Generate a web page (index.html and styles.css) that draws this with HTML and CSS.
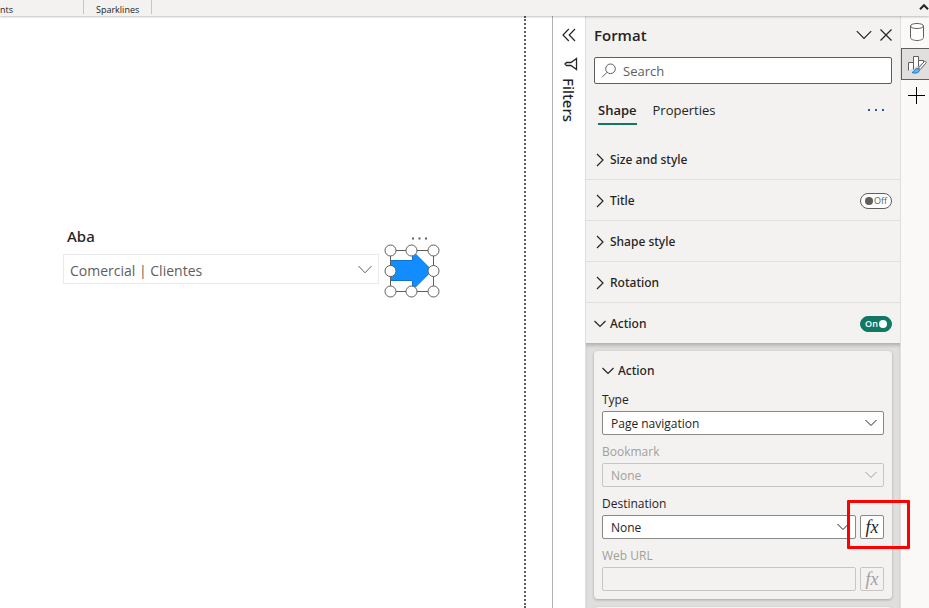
FILE: index.html
```html
<!DOCTYPE html>
<html lang="en">
<head>
    <meta charset="UTF-8">
    <meta name="viewport" content="width=device-width, initial-scale=1.0">
    <title>Report editor</title>
    <link rel="stylesheet" href="styles.css">
</head>
<body>
    <header class="ribbon">
        <div class="ribbon-group ribbon-first">nts</div>
        <div class="ribbon-group">Sparklines</div>
        <button class="icon-btn ribbon-collapse" aria-label="Collapse ribbon">
            <svg width="10" height="6" viewBox="0 0 10 6"><path d="M1 5.2 5 1.2 9 5.2" stroke-width="2"/></svg>
        </button>
    </header>

    <main class="workspace">
        <section class="canvas">
            <div class="report-page">
                <!-- Slicer -->
                <div class="slicer">
                    <label class="slicer-title" for="aba">Aba</label>
                    <div class="select-wrap">
                        <select id="aba">
                            <option>Comercial | Clientes</option>
                        </select>
                        <svg class="chevron" width="14" height="9" viewBox="0 0 14 9"><path d="M.5 1 7 7.8 13.5 1"/></svg>
                    </div>
                </div>

                <!-- Selected arrow shape -->
                <div class="shape">
                    <button class="icon-btn shape-more" aria-label="More options">
                        <svg width="16" height="3" viewBox="0 0 16 3"><path class="solid" d="M0 .5h2v2H0zM6.5 .5h2v2h-2zM13 .5h2v2h-2z"/></svg>
                    </button>
                    <svg width="56" height="54" viewBox="0 0 56 54">
                        <path d="M6.5 16.5H28.5V7L48 26.5 31 43.5 28.5 43V36.5H6.5z" fill="#118dff" stroke="#0f72cc"/>
                        <rect x="6.5" y="6.5" width="43" height="41" fill="none" stroke="#605e5c"/>
                        <g fill="#fff" stroke="#605e5c">
                            <circle cx="6.5" cy="6.5" r="5.5"/>
                            <circle cx="27.5" cy="6.5" r="5.5"/>
                            <circle cx="49.5" cy="6.5" r="5.5"/>
                            <circle cx="6.5" cy="27" r="5.5"/>
                            <circle cx="49.5" cy="27" r="5.5"/>
                            <circle cx="6.5" cy="47.5" r="5.5"/>
                            <circle cx="27.5" cy="47.5" r="5.5"/>
                            <circle cx="49.5" cy="47.5" r="5.5"/>
                        </g>
                    </svg>
                </div>
            </div>
        </section>

        <aside class="filters">
            <button class="icon-btn" aria-label="Expand filters">
                <svg width="14" height="14" viewBox="0 0 14 14"><path d="M6.8 1 1 7l5.8 6M13 1 7.2 7 13 13" stroke-width="1.2"/></svg>
            </button>
            <svg class="funnel" width="14" height="14" viewBox="0 0 14 14"><path d="M12.5 1.5v11L7 8.5H2.5L1 7 2.5 5.5H7z" stroke-width="1.3"/></svg>
            <span class="filters-label">Filters</span>
        </aside>

        <aside class="format">
            <div class="format-header">
                <h2>Format</h2>
                <button class="icon-btn" aria-label="Collapse">
                    <svg width="16" height="10" viewBox="0 0 16 10"><path d="M.8 1.2 8 8.5 15.2 1.2" stroke-width="1.2"/></svg>
                </button>
                <button class="icon-btn" aria-label="Close">
                    <svg width="12" height="12" viewBox="0 0 12 12"><path d="M.5 .5l11 11M11.5 .5l-11 11" stroke-width="1.2"/></svg>
                </button>
            </div>

            <div class="search">
                <svg width="16" height="16" viewBox="0 0 16 16"><circle cx="9.5" cy="5.8" r="4.8"/><path d="M6 9.3 1 14.3"/></svg>
                <input type="text" placeholder="Search" aria-label="Search">
            </div>

            <div class="tabs">
                <button class="tab active">Shape</button>
                <button class="tab">Properties</button>
                <button class="icon-btn tabs-more" aria-label="More options">
                    <svg width="16" height="2" viewBox="0 0 16 2"><path class="blue" d="M0 0h2v2H0zM7 0h2v2H7zM14 0h2v2h-2z"/></svg>
                </button>
            </div>

            <div class="group">
                <button class="group-btn"><svg width="12" height="14" viewBox="0 0 12 14"><path d="M3 1l6 6-6 6"/></svg>Size and style</button>
            </div>
            <div class="group">
                <button class="group-btn"><svg width="12" height="14" viewBox="0 0 12 14"><path d="M3 1l6 6-6 6"/></svg>Title</button>
                <label class="toggle"><input type="checkbox"><span>Off</span></label>
            </div>
            <div class="group">
                <button class="group-btn"><svg width="12" height="14" viewBox="0 0 12 14"><path d="M3 1l6 6-6 6"/></svg>Shape style</button>
            </div>
            <div class="group">
                <button class="group-btn"><svg width="12" height="14" viewBox="0 0 12 14"><path d="M3 1l6 6-6 6"/></svg>Rotation</button>
            </div>
            <div class="group group-open">
                <button class="group-btn"><svg width="12" height="14" viewBox="0 0 12 14"><path d="M.5 4 6 9.5 11.5 4"/></svg>Action</button>
                <label class="toggle toggle-on"><input type="checkbox" checked><span>On</span></label>
            </div>

            <div class="cards">
                <div class="card">
                    <button class="group-btn card-title"><svg width="12" height="14" viewBox="0 0 12 14"><path d="M.5 4 6 9.5 11.5 4"/></svg>Action</button>

                    <div class="field">
                        <label for="type">Type</label>
                        <div class="select-wrap">
                            <select id="type"><option>Page navigation</option></select>
                            <svg class="chevron" width="12" height="8" viewBox="0 0 12 8"><path d="M.5 1 6 6.5 11.5 1"/></svg>
                        </div>
                    </div>

                    <div class="field disabled">
                        <label for="bookmark">Bookmark</label>
                        <div class="select-wrap">
                            <select id="bookmark" disabled><option>None</option></select>
                            <svg class="chevron" width="12" height="8" viewBox="0 0 12 8"><path d="M.5 1 6 6.5 11.5 1"/></svg>
                        </div>
                    </div>

                    <div class="field">
                        <label for="destination">Destination</label>
                        <div class="field-row">
                            <div class="select-wrap">
                                <select id="destination"><option>None</option></select>
                                <svg class="chevron" width="12" height="8" viewBox="0 0 12 8"><path d="M.5 1 6 6.5 11.5 1"/></svg>
                            </div>
                            <div class="fx-wrap">
                                <button class="fx">fx</button>
                                <div class="highlight"></div>
                            </div>
                        </div>
                    </div>

                    <div class="field disabled">
                        <label for="url">Web URL</label>
                        <div class="field-row">
                            <input id="url" type="text" disabled>
                            <button class="fx" disabled>fx</button>
                        </div>
                    </div>
                </div>
                <div class="card"></div>
            </div>
        </aside>

        <nav class="rail">
            <button class="rail-btn" aria-label="Data">
                <svg width="16" height="20" viewBox="0 0 16 20"><g fill="#fff" stroke="#605e5c"><path d="M1.5 4v11.5C1.5 17.2 4.4 18.5 8 18.5s6.5-1.3 6.5-3V4"/><ellipse cx="8" cy="4" rx="6.5" ry="2.5"/></g></svg>
            </button>
            <button class="rail-btn selected" aria-label="Format">
                <svg width="20" height="20" viewBox="0 0 20 20">
                    <path d="M1.5 16.5v-8h5v-6h5v4h5v2" fill="#fff" stroke="#605e5c"/>
                    <path d="M6.5 8.5v7M11.5 6.5v6" stroke="#605e5c"/>
                    <path d="M18.8 7.5c.6.5.4 1.2 0 1.7l-5.5 6.3-1.8-1.5 5.6-6.2c.5-.5 1.1-.7 1.7-.3z" fill="#fff" stroke="#605e5c"/>
                    <path d="M5 18.5c2.2-.3 2.5-3.7 5-4 2-.1 3.2 1.6 2 3-1.7 1.9-4.8 2-7 1z" fill="#69afe5" stroke="#1f78c8"/>
                </svg>
            </button>
            <button class="rail-btn" aria-label="Add">
                <svg width="18" height="18" viewBox="0 0 18 18"><path d="M8.5 0v17M0 8.5h17" stroke="#000"/></svg>
            </button>
        </nav>
    </main>
</body>
</html>
```
FILE: styles.css
```css
/* General styling */
* {
    box-sizing: border-box;
}

body {
    font-family: "Open Sans", "Noto Sans", sans-serif;
    font-size: 12px;
    line-height: 16px;
    color: #252423;
    background-color: #fff;
    margin: 0;
    height: 100vh;
    display: flex;
    flex-direction: column;
    overflow: hidden;
}

button, input, select {
    font: inherit;
    color: inherit;
    margin: 0;
    padding: 0;
}

svg {
    display: block;
    flex: none;
    fill: none;
    stroke: #252423;
}

.solid {
    fill: #605e5c;
    stroke: none;
}

.blue {
    fill: #2b579a;
    stroke: none;
}

.icon-btn {
    border: none;
    background: none;
    cursor: pointer;
}

/* Ribbon */
.ribbon {
    display: flex;
    flex: none;
    height: 16px;
    background-color: #f3f2f1;
    box-shadow: 0 1px 2px rgba(0, 0, 0, 0.25);
    position: relative;
    z-index: 2;
    font-size: 9px;
    line-height: 20px;
}

.ribbon-group {
    height: 14px;
    padding: 0 12px;
    border-right: 1px solid #c8c6c4;
}

.ribbon-first {
    width: 84px;
    padding: 0;
}

.ribbon-collapse {
    margin: 4px 0 0 auto;
    align-self: flex-start;
}

.workspace {
    display: flex;
    flex: 1;
    min-height: 0;
}

/* Canvas */
.canvas {
    flex: 1;
    padding-right: 26px;
}

.report-page {
    position: relative;
    height: 100%;
    border-right: 2px dotted #605e5c;
}

.slicer {
    position: absolute;
    left: 63px;
    top: 212px;
    width: 316px;
}

.slicer-title {
    display: block;
    padding-left: 4px;
    font-family: "Noto Sans", sans-serif;
    font-size: 15px;
    font-weight: 500;
    line-height: 16px;
}

.shape {
    position: absolute;
    left: 384px;
    top: 221px;
}

.shape-more {
    display: block;
    margin: 0 0 4px 28px;
}

/* Filters pane */
.filters {
    display: flex;
    flex-direction: column;
    align-items: center;
    width: 33px;
    padding-top: 12px;
    border-left: 1px solid #b3b0ad;
}

.funnel {
    margin: 15px 0 7px 4px;
}

.filters-label {
    writing-mode: vertical-rl;
    font-family: "Noto Sans", sans-serif;
    font-size: 15px;
    font-weight: 500;
}

/* Format pane */
.format {
    display: flex;
    flex-direction: column;
    width: 316px;
    border: solid #e1dfdd;
    border-width: 0 1px;
    background-color: #f3f2f1;
}

.format-header {
    display: flex;
    align-items: center;
    gap: 8px;
    padding: 9px 8px 11px;
}

.format-header h2 {
    flex: 1;
    margin: 0;
    font-size: 15px;
    font-weight: 600;
    line-height: 20px;
}

.search {
    display: flex;
    align-items: center;
    gap: 6px;
    height: 27px;
    margin: 1px 8px 0;
    padding: 0 6px;
    border: 1px solid #605e5c;
    border-radius: 2px;
    background-color: #fff;
}

.search input {
    flex: 1;
    min-width: 0;
    border: none;
    outline: none;
    background: none;
    font-size: 13px;
}

.search input::placeholder {
    color: #605e5c;
    opacity: 1;
}

.search svg {
    stroke: #605e5c;
}

.tabs {
    display: flex;
    gap: 16px;
    height: 55px;
    padding: 16px 16px 0 12px;
    align-items: flex-start;
}

.tab {
    height: 25px;
    padding-bottom: 3px;
    border: none;
    border-bottom: 2px solid transparent;
    background: none;
    font-size: 13px;
    line-height: 20px;
    cursor: pointer;
}

.tab.active {
    border-bottom-color: #117865;
    font-weight: 600;
}

.tabs-more {
    margin: 9px 0 0 auto;
}

.group {
    display: flex;
    align-items: center;
    flex: none;
    height: 41px;
    padding: 2px 8px 0;
    border-bottom: 1px solid #e1dfdd;
}

.group-btn {
    display: flex;
    align-items: center;
    gap: 4px;
    flex: 1;
    border: none;
    background: none;
    font-family: "Noto Sans", sans-serif;
    font-weight: 500;
    text-align: left;
    cursor: pointer;
}

.group-btn svg {
    stroke-width: 1.2;
}

.group-open {
    height: 40px;
    border-bottom: none;
}

/* Toggle switch */
.toggle {
    display: flex;
    align-items: center;
    justify-content: center;
    gap: 1px;
    width: 32px;
    height: 16px;
    border: 1px solid #605e5c;
    border-radius: 8px;
    background-color: #fff;
    color: #605e5c;
    font-size: 9px;
    line-height: 14px;
    cursor: pointer;
}

.toggle input {
    appearance: none;
    width: 8px;
    height: 8px;
    border-radius: 50%;
    background-color: #605e5c;
}

.toggle-on {
    flex-direction: row-reverse;
    border-color: #117865;
    background-color: #117865;
    color: #fff;
    font-weight: 600;
}

.toggle-on input {
    background-color: #fff;
}

/* Cards */
.cards {
    display: flex;
    flex-direction: column;
    gap: 8px;
    flex: 1;
    min-height: 0;
    padding: 8px 8px 0;
    background-color: #e1dfdd;
    box-shadow: inset 0 4px 4px -2px rgba(0, 0, 0, 0.25);
}

.card {
    flex: none;
    padding: 8px;
    border-radius: 4px;
    background-color: #f3f2f1;
    box-shadow: 0 1px 3px rgba(0, 0, 0, 0.25);
}

.card-title {
    height: 24px;
}

.field label {
    display: block;
    padding: 9px 0 3px;
}

.field-row {
    display: flex;
    gap: 4px;
}

.select-wrap {
    position: relative;
    flex: 1;
}

select, .field input {
    appearance: none;
    display: block;
    width: 100%;
    height: 24px;
    padding: 2px 0 0 8px;
    border: 1px solid #8a8886;
    border-radius: 2px;
    background-color: #fff;
}

.field-row input {
    flex: 1;
    min-width: 0;
}

.chevron {
    position: absolute;
    right: 7px;
    top: 8px;
    pointer-events: none;
}

.slicer .select-wrap {
    margin-top: 10px;
}

.slicer select {
    height: 30px;
    padding: 3px 0 0 6px;
    border-color: #eaeaea;
    border-radius: 0;
    font-size: 14px;
    color: #605e5c;
}

.slicer .chevron {
    top: 11px;
    stroke: #605e5c;
}

.fx-wrap {
    position: relative;
}

.fx {
    display: block;
    width: 24px;
    height: 24px;
    border: 1px solid #8a8886;
    border-radius: 2px;
    background-color: #fff;
    font-family: "Liberation Serif", serif;
    font-size: 18px;
    font-style: italic;
    line-height: 20px;
    cursor: pointer;
}

.highlight {
    position: absolute;
    left: -13px;
    top: -15px;
    width: 63px;
    height: 49px;
    border: 3px solid #f00;
    border-radius: 1px;
    z-index: 3;
    pointer-events: none;
}

.disabled label, .disabled select, .disabled .fx {
    color: #a19f9d;
    opacity: 1;
}

.disabled select, .disabled input, .disabled .fx {
    border-color: #c8c6c4;
    background-color: #f3f2f1;
}

.disabled .chevron {
    stroke: #a19f9d;
}

/* Right rail */
.rail {
    width: 28px;
    background-color: #faf9f8;
}

.rail-btn {
    display: flex;
    align-items: center;
    justify-content: center;
    width: 32px;
    height: 32px;
    border: none;
    background: none;
    cursor: pointer;
}

.rail-btn.selected {
    border: 1px solid #605e5c;
    background-color: #e1dfdd;
}
```
